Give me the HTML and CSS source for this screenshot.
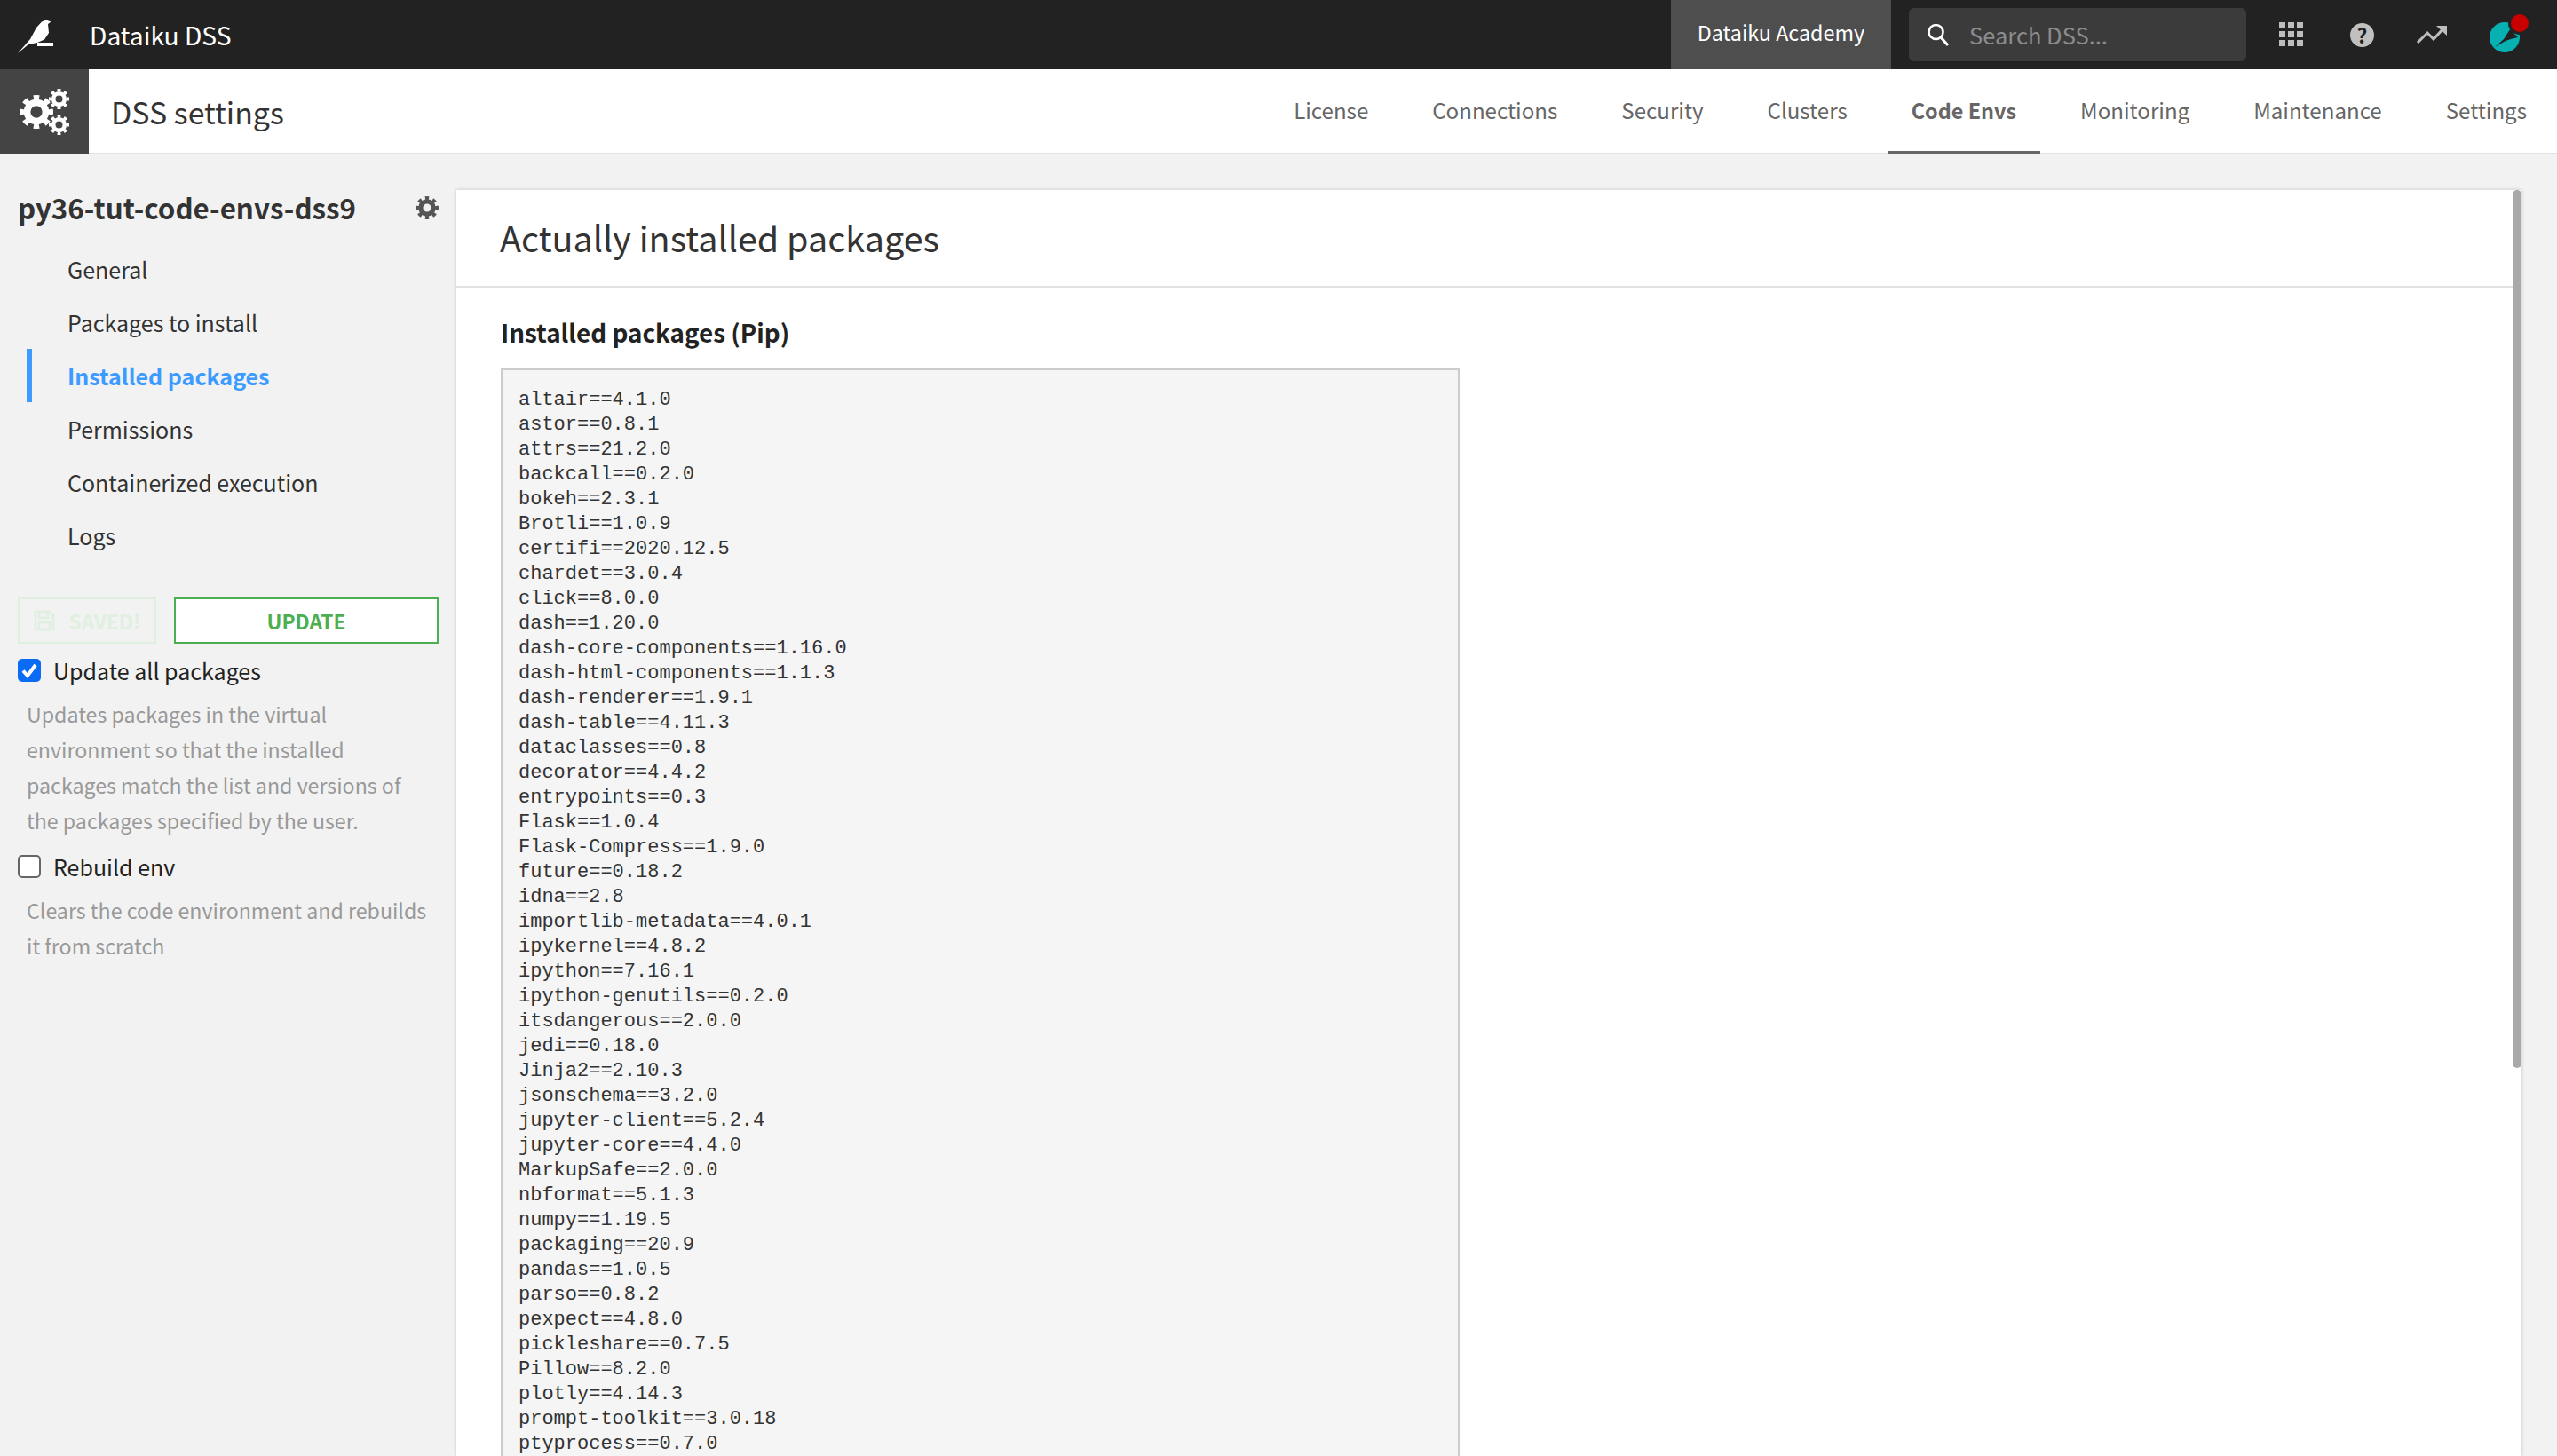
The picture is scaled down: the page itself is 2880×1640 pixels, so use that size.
FILE: index.html
```html
<!DOCTYPE html>
<html lang="en">
<head>
<meta charset="utf-8">
<title>DSS settings</title>
<link rel="stylesheet" href="styles.css">
</head>
<body>
<svg class="defs" width="0" height="0" aria-hidden="true">
  <symbol id="gear" viewBox="0 0 40 40">
    <circle cx="20" cy="20" r="11" fill="none" stroke="currentColor" stroke-width="8"/>
    <circle cx="20" cy="20" r="17" fill="none" stroke="currentColor" stroke-width="6" pathLength="64" stroke-dasharray="4 4" stroke-dashoffset="2"/>
  </symbol>
</svg>
<header class="topbar">
  <svg class="logo" width="60" height="62" viewBox="0 0 60 62"><path fill="#fff" d="M20 60 34 44 41 31 47 24.500 52 22.500 57.500 24.500 54 27 55 37 50 44.500 42 48 32 50Z"/><rect fill="#fff" x="42" y="48" width="18" height="4"/></svg>
  <span class="brand">Dataiku DSS</span>
  <a class="academy">Dataiku Academy</a>
  <div class="search">
    <svg width="26" height="26" viewBox="0 0 26 26"><circle cx="10.500" cy="10" r="8" fill="none" stroke="#fff" stroke-width="2.600"/><path d="m16 16 8 9" stroke="#fff" stroke-width="3" fill="none"/></svg>
    <span>Search DSS...</span>
  </div>
  <svg class="ticon grid-icon" width="28" height="28" viewBox="0 0 28 28" fill="#bdbdbd"><rect x="0" y="0" width="7" height="7"/><rect x="10" y="0" width="7" height="7"/><rect x="20" y="0" width="7" height="7"/><rect x="0" y="10" width="7" height="7"/><rect x="10" y="10" width="7" height="7"/><rect x="20" y="10" width="7" height="7"/><rect x="0" y="20" width="7" height="7"/><rect x="10" y="20" width="7" height="7"/><rect x="20" y="20" width="7" height="7"/></svg>
  <span class="help">?</span>
  <svg class="ticon trend" width="36" height="24" viewBox="0 0 36 24"><path d="M2 21 13 10 20 17 32 4" fill="none" stroke="#bdbdbd" stroke-width="3"/><path d="M23 2h12v11z" fill="#bdbdbd"/></svg>
  <div class="avatar">
    <svg width="50" height="54" viewBox="0 0 50 54"><circle cx="21" cy="33" r="17" fill="#08b1b1"/><path d="M10 44 20 35 27 24 31 28 36 33 28 35 22 37Z" fill="#222"/><circle cx="38" cy="17" r="13" fill="#222"/><circle cx="38" cy="17" r="10" fill="#c80000"/></svg>
  </div>
</header>
<nav class="subbar">
  <div class="appicon">
    <svg width="56" height="52" viewBox="0 0 56 52" class="cogs">
      <use href="#gear" x="0" y="7" width="38" height="38"/>
      <use href="#gear" x="33" y="0" width="23" height="23"/>
      <use href="#gear" x="33" y="29" width="23" height="23"/>
    </svg>
  </div>
  <div class="apptitle">DSS settings</div>
  <ul class="tabs">
    <li>License</li><li>Connections</li><li>Security</li><li>Clusters</li><li class="on">Code Envs</li><li>Monitoring</li><li>Maintenance</li><li>Settings</li>
  </ul>
</nav>
<div class="layout">
  <aside class="side">
    <div class="env">
      <h2>py36-tut-code-envs-dss9</h2>
      <svg class="envgear" width="26" height="26"><use href="#gear" width="26" height="26"/></svg>
    </div>
    <ul class="menu">
      <li>General</li>
      <li>Packages to install</li>
      <li class="on">Installed packages</li>
      <li>Permissions</li>
      <li>Containerized execution</li>
      <li>Logs</li>
    </ul>
    <div class="btns">
      <button class="saved"><svg width="24" height="24" viewBox="0 0 24 24" fill="none" stroke="#dff0e0" stroke-width="2.500"><path d="M2 2h16l4 4v16H2z"/><path d="M6 2v7h10V2M6 22v-8h12v8"/></svg>SAVED!</button>
      <button class="update">UPDATE</button>
    </div>
    <div class="opt"><span class="box on"><svg width="26" height="26" viewBox="0 0 26 26"><path d="M6 13.500 11 19 20 7" fill="none" stroke="#fff" stroke-width="4"/></svg></span>Update all packages</div>
    <p class="help-text one">Updates packages in the virtual environment so that the installed packages match the list and versions of the packages specified by the user.</p>
    <div class="opt second"><span class="box"></span>Rebuild env</div>
    <p class="help-text">Clears the code environment and rebuilds it from scratch</p>
  </aside>
  <main class="panel">
    <h1>Actually installed packages</h1>
    <section class="body">
      <h3>Installed packages (Pip)</h3>
<pre>altair==4.1.0
astor==0.8.1
attrs==21.2.0
backcall==0.2.0
bokeh==2.3.1
Brotli==1.0.9
certifi==2020.12.5
chardet==3.0.4
click==8.0.0
dash==1.20.0
dash-core-components==1.16.0
dash-html-components==1.1.3
dash-renderer==1.9.1
dash-table==4.11.3
dataclasses==0.8
decorator==4.4.2
entrypoints==0.3
Flask==1.0.4
Flask-Compress==1.9.0
future==0.18.2
idna==2.8
importlib-metadata==4.0.1
ipykernel==4.8.2
ipython==7.16.1
ipython-genutils==0.2.0
itsdangerous==2.0.0
jedi==0.18.0
Jinja2==2.10.3
jsonschema==3.2.0
jupyter-client==5.2.4
jupyter-core==4.4.0
MarkupSafe==2.0.0
nbformat==5.1.3
numpy==1.19.5
packaging==20.9
pandas==1.0.5
parso==0.8.2
pexpect==4.8.0
pickleshare==0.7.5
Pillow==8.2.0
plotly==4.14.3
prompt-toolkit==3.0.18
ptyprocess==0.7.0</pre>
    </section>
    <div class="scrollbar"></div>
  </main>
</div>
</body>
</html>
```
FILE: styles.css
```css
* { box-sizing: border-box; }
html, body { margin: 0; height: 1640px; overflow: hidden; }
body { font-family: "Noto Sans CJK SC", "Source Sans Pro", "Noto Sans", sans-serif; background: #f2f2f2; color: #333; }
.defs { position: absolute; }
ul { list-style: none; margin: 0; padding: 0; }

.topbar { height: 78px; background: #222; display: flex; align-items: center; position: relative; padding-right: 30px; }
.logo { flex: none; margin-left: 0; align-self: flex-start; }
.brand { margin-left: 41px; color: #fff; font-size: 28.2px; line-height: 76px; }
.academy { margin-left: auto; width: 248px; height: 78px; background: #4e4e4e; color: #fff; font-size: 23.3px; line-height: 72px; text-align: center; }
.search { margin-left: 20px; width: 380px; height: 60px; background: #3b3b3b; border-radius: 6px; display: flex; align-items: center; padding-left: 20px; color: #8c8c8c; font-size: 25.5px; }
.search span { margin-left: 22px; line-height: 58px; }
.ticon { flex: none; }
.grid-icon { margin-left: 37px; }
.help { margin-left: 52px; width: 27px; height: 27px; border-radius: 50%; background: #c0c0c0; color: #222; font-size: 23px; font-weight: 700; line-height: 27px; text-align: center; }
.trend { margin-left: 47px; }
.avatar { margin-left: 43px; width: 50px; height: 54px; align-self: flex-start; margin-top: 9px; }

.subbar { height: 96px; background: #fff; border-bottom: 2px solid #e2e2e2; display: flex; }
.appicon { width: 100px; height: 96px; background: #444; display: flex; align-items: center; justify-content: center; }
.cogs { color: #fff; }
.apptitle { margin-left: 25px; font-size: 33.9px; line-height: 96px; color: #333; }
.tabs { margin-left: auto; display: flex; gap: 18px; padding-right: 7px; }
.tabs li { padding: 0 27px; height: 96px; font-size: 24.1px; line-height: 92px; color: #666; }
.tabs li.on { font-size: 23.4px; font-weight: 700; border-bottom: 4px solid #666; }

.layout { display: flex; height: 1466px; }
.side { width: 514px; flex: none; padding: 40px 20px 0; }
.env { display: flex; align-items: center; justify-content: space-between; height: 40px; }
.env h2 { margin: 0; font-size: 31.3px; font-weight: 700; color: #333; line-height: 40px; }
.envgear { color: #555; }
.menu { margin-top: 19px; margin-left: 10px; }
.menu li { height: 60px; line-height: 60px; font-size: 25px; padding-left: 40px; color: #333; border-left: 6px solid transparent; }
.menu li.on { color: #3d9bff; font-weight: 700; border-left-color: #3d9bff; }
.btns { display: flex; gap: 20px; margin-top: 40px; }
.btns button { height: 52px; font-family: inherit; font-size: 22.7px; font-weight: 700; background: none; padding: 0; display: flex; align-items: center; justify-content: center; }
.saved { width: 156px; border: 2px solid #dff0e0; color: #dff0e0; gap: 16px; }
.update { width: 298px; border: 2px solid #4caf50; background: #fff !important; color: #4caf50; }
.opt { display: flex; align-items: center; margin-top: 10px; height: 40px; font-size: 25px; color: #222; }
.opt.second { margin-top: 12px; }
.box { flex: none; width: 26px; height: 26px; border-radius: 5px; border: 2px solid #666; background: #fff; margin-right: 14px; position: relative; }
.box.on { background: #0a6cf5; border: 0; }
.box svg { display: block; }
.help-text { margin: 9px 5px 0 10px; font-size: 23.2px; line-height: 40px; color: #999; }

.panel { flex: 1; margin: 40px 40px 0 0; background: #fff; box-shadow: 0 0 4px rgba(0,0,0,.2); position: relative; overflow: hidden; }
.panel h1 { margin: 0; height: 110px; padding-left: 49px; font-size: 39.5px; font-weight: 400; line-height: 106px; color: #333; border-bottom: 2px solid #e2e2e2; }
.body { padding: 28px 50px 0; }
.body h3 { margin: 0; font-size: 27.8px; font-weight: 700; line-height: 44px; color: #222; }
pre { margin: 19px 0 0; width: 1080px; height: 1300px; padding: 20px 18px; background: #f5f5f5; border: 2px solid #ccc; font-family: "Liberation Mono", monospace; font-size: 22px; line-height: 28px; color: #333; overflow: hidden; }
.scrollbar { position: absolute; top: 0; right: 0; width: 10px; height: 989px; border-radius: 5px; background: #a9a9a9; }
```
